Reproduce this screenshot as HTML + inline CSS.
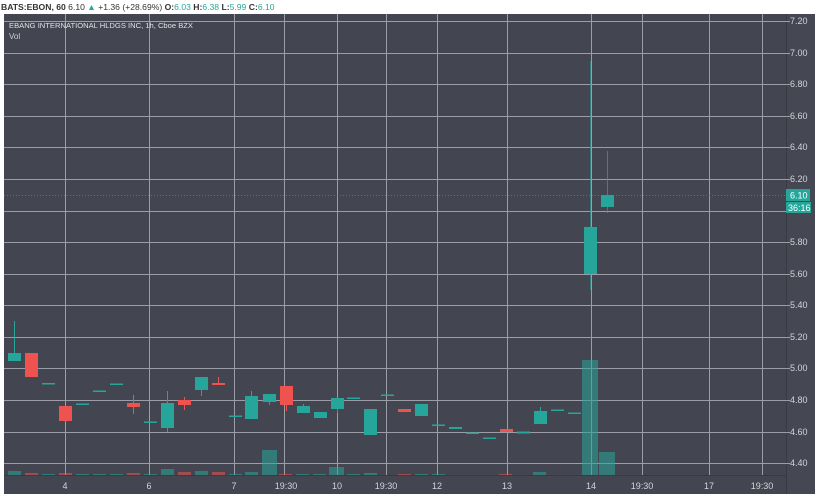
<!DOCTYPE html>
<html><head><meta charset="utf-8"><style>
body{margin:0;width:820px;height:498px;background:#fff;overflow:hidden;font-family:"Liberation Sans",sans-serif}
</style></head><body>
<svg width="820" height="498" xmlns="http://www.w3.org/2000/svg" font-family="Liberation Sans, sans-serif">
<rect x="0" y="0" width="820" height="498" fill="#fff"/>
<rect x="4" y="14" width="811" height="480" fill="#434550"/>
<rect x="786" y="14" width="29" height="480" fill="#454753"/>
<line x1="4" y1="475.5" x2="786" y2="475.5" stroke="#393a44" stroke-width="1"/>
<line x1="786.5" y1="14" x2="786.5" y2="494" stroke="#393a44" stroke-width="1"/>
<g stroke="#9c9da6" stroke-width="1">
<line x1="4" x2="790" y1="21.5" y2="21.5"/><line x1="4" x2="790" y1="53.5" y2="53.5"/><line x1="4" x2="790" y1="84.5" y2="84.5"/><line x1="4" x2="790" y1="116.5" y2="116.5"/><line x1="4" x2="790" y1="147.5" y2="147.5"/><line x1="4" x2="790" y1="179.5" y2="179.5"/><line x1="4" x2="790" y1="211.5" y2="211.5"/><line x1="4" x2="790" y1="242.5" y2="242.5"/><line x1="4" x2="790" y1="274.5" y2="274.5"/><line x1="4" x2="790" y1="305.5" y2="305.5"/><line x1="4" x2="790" y1="337.5" y2="337.5"/><line x1="4" x2="790" y1="368.5" y2="368.5"/><line x1="4" x2="790" y1="400.5" y2="400.5"/><line x1="4" x2="790" y1="432.5" y2="432.5"/><line x1="4" x2="790" y1="463.5" y2="463.5"/>
<line y1="14" y2="475" x1="65.5" x2="65.5"/><line y1="14" y2="475" x1="149.5" x2="149.5"/><line y1="14" y2="475" x1="234.5" x2="234.5"/><line y1="14" y2="475" x1="284.5" x2="284.5"/><line y1="14" y2="475" x1="337.5" x2="337.5"/><line y1="14" y2="475" x1="386.5" x2="386.5"/><line y1="14" y2="475" x1="437.5" x2="437.5"/><line y1="14" y2="475" x1="507.5" x2="507.5"/><line y1="14" y2="475" x1="591.5" x2="591.5"/><line y1="14" y2="475" x1="642.5" x2="642.5"/><line y1="14" y2="475" x1="709.5" x2="709.5"/><line y1="14" y2="475" x1="762.5" x2="762.5"/>
</g>
<line x1="4" x2="786" y1="195.5" y2="195.5" stroke="#26a69a" stroke-width="1" stroke-dasharray="1 2" opacity="0.7"/>
<g opacity="0.55">
<rect x="8" y="471" width="13" height="4" fill="#26a69a"/><rect x="25" y="473" width="13" height="2" fill="#ef5350"/><rect x="42" y="474" width="13" height="1" fill="#26a69a"/><rect x="59" y="473" width="13" height="2" fill="#ef5350"/><rect x="76" y="474" width="13" height="1" fill="#26a69a"/><rect x="93" y="474" width="13" height="1" fill="#26a69a"/><rect x="110" y="474" width="13" height="1" fill="#26a69a"/><rect x="127" y="473" width="13" height="2" fill="#ef5350"/><rect x="144" y="474" width="13" height="1" fill="#26a69a"/><rect x="161" y="469" width="13" height="6" fill="#26a69a"/><rect x="178" y="472" width="13" height="3" fill="#ef5350"/><rect x="195" y="471" width="13" height="4" fill="#26a69a"/><rect x="212" y="472" width="13" height="3" fill="#ef5350"/><rect x="229" y="474" width="13" height="1" fill="#26a69a"/><rect x="245" y="472" width="13" height="3" fill="#26a69a"/><rect x="262" y="450" width="15" height="25" fill="#26a69a"/><rect x="279" y="474" width="13" height="1" fill="#ef5350"/><rect x="296" y="474" width="13" height="1" fill="#26a69a"/><rect x="313" y="474" width="13" height="1" fill="#26a69a"/><rect x="329" y="467" width="15" height="8" fill="#26a69a"/><rect x="347" y="474" width="13" height="1" fill="#26a69a"/><rect x="364" y="473" width="13" height="2" fill="#26a69a"/><rect x="398" y="474" width="13" height="1" fill="#ef5350"/><rect x="415" y="474" width="13" height="1" fill="#26a69a"/><rect x="432" y="474" width="13" height="1" fill="#26a69a"/><rect x="499" y="474" width="13" height="1" fill="#ef5350"/><rect x="533" y="472" width="13" height="3" fill="#26a69a"/><rect x="582" y="360" width="16" height="115" fill="#26a69a"/><rect x="599" y="452" width="16" height="23" fill="#26a69a"/>
</g>
<g stroke-width="1">
<line x1="14.5" y1="321" x2="14.5" y2="361" stroke="#26a69a"/><rect x="8" y="353" width="13" height="8" fill="#26a69a"/>
<rect x="25" y="353" width="13" height="24" fill="#ef5350"/>
<rect x="42" y="383" width="13" height="1.5" fill="#26a69a"/>
<rect x="59" y="406" width="13" height="15" fill="#ef5350"/>
<rect x="76" y="403.5" width="13" height="1.5" fill="#26a69a"/>
<rect x="93" y="390.5" width="13" height="1.5" fill="#26a69a"/>
<rect x="110" y="383.5" width="13" height="1.5" fill="#26a69a"/>
<line x1="133.5" y1="395" x2="133.5" y2="414" stroke="#ef5350"/><rect x="127" y="403" width="13" height="4" fill="#ef5350"/>
<rect x="144" y="421.5" width="13" height="1.5" fill="#26a69a"/>
<line x1="167.5" y1="391" x2="167.5" y2="432" stroke="#26a69a"/><rect x="161" y="403" width="13" height="25" fill="#26a69a"/>
<line x1="184.5" y1="397" x2="184.5" y2="410" stroke="#ef5350"/><rect x="178" y="400" width="13" height="5" fill="#ef5350"/>
<line x1="201.5" y1="377" x2="201.5" y2="396" stroke="#26a69a"/><rect x="195" y="377" width="13" height="13" fill="#26a69a"/>
<line x1="218.5" y1="377" x2="218.5" y2="385" stroke="#ef5350"/><rect x="212" y="383" width="13" height="2" fill="#ef5350"/>
<rect x="229" y="415.5" width="13" height="1.5" fill="#26a69a"/>
<line x1="251.5" y1="391" x2="251.5" y2="419" stroke="#26a69a"/><rect x="245" y="396" width="13" height="23" fill="#26a69a"/>
<line x1="269.5" y1="394" x2="269.5" y2="405" stroke="#26a69a"/><rect x="263" y="394" width="13" height="8" fill="#26a69a"/>
<line x1="286.5" y1="386" x2="286.5" y2="411" stroke="#ef5350"/><rect x="280" y="386" width="13" height="19" fill="#ef5350"/>
<line x1="303.5" y1="404" x2="303.5" y2="413" stroke="#26a69a"/><rect x="297" y="406" width="13" height="7" fill="#26a69a"/>
<rect x="314" y="412" width="13" height="6" fill="#26a69a"/>
<line x1="337.5" y1="398" x2="337.5" y2="413" stroke="#26a69a"/><rect x="331" y="398" width="13" height="11" fill="#26a69a"/>
<rect x="347" y="397.5" width="13" height="1.5" fill="#26a69a"/>
<rect x="364" y="409" width="13" height="26" fill="#26a69a"/>
<rect x="381" y="394.5" width="13" height="1.5" fill="#26a69a"/>
<rect x="398" y="409" width="13" height="3" fill="#ef5350"/>
<rect x="415" y="404" width="13" height="12" fill="#26a69a"/>
<rect x="432" y="424.5" width="13" height="1.5" fill="#26a69a"/>
<rect x="449" y="427" width="13" height="2" fill="#26a69a"/>
<rect x="466" y="432.5" width="13" height="1.5" fill="#26a69a"/>
<rect x="483" y="437.5" width="13" height="1.5" fill="#26a69a"/>
<rect x="500" y="429" width="13" height="3" fill="#ef5350"/>
<rect x="517" y="431.5" width="13" height="2" fill="#26a69a"/>
<line x1="540.5" y1="407" x2="540.5" y2="424" stroke="#26a69a"/><rect x="534" y="411" width="13" height="13" fill="#26a69a"/>
<rect x="551" y="409.5" width="13" height="1.5" fill="#26a69a"/>
<rect x="568" y="412.5" width="13" height="1.5" fill="#26a69a"/>
<line x1="590.5" y1="61" x2="590.5" y2="290" stroke="#26a69a" opacity="0.6"/><rect x="584" y="227" width="13" height="47" fill="#26a69a"/>
<line x1="607.5" y1="151" x2="607.5" y2="213" stroke="#26a69a" opacity="0.7"/><rect x="601" y="195" width="13" height="12" fill="#26a69a"/>
</g>
<g fill="#d4d5da" font-size="9">
<text x="790" y="24">7.20</text><text x="790" y="56">7.00</text><text x="790" y="87">6.80</text><text x="790" y="119">6.60</text><text x="790" y="150">6.40</text><text x="790" y="182">6.20</text><text x="790" y="245">5.80</text><text x="790" y="277">5.60</text><text x="790" y="308">5.40</text><text x="790" y="340">5.20</text><text x="790" y="371">5.00</text><text x="790" y="403">4.80</text><text x="790" y="435">4.60</text><text x="790" y="466">4.40</text>
</g>
<rect x="786" y="189" width="24" height="12" fill="#26a69a"/>
<text x="790" y="198.5" fill="#fff" font-size="9">6.10</text>
<rect x="786" y="202" width="25" height="11" fill="#26a69a"/>
<text x="788" y="211" fill="#fff" font-size="9">36:16</text>
<g fill="#d4d5da" font-size="9" text-anchor="middle">
<text x="65" y="489">4</text><text x="149" y="489">6</text><text x="234" y="489">7</text><text x="286" y="489">19:30</text><text x="337" y="489">10</text><text x="386" y="489">19:30</text><text x="437" y="489">12</text><text x="507" y="489">13</text><text x="591" y="489">14</text><text x="642" y="489">19:30</text><text x="709" y="489">17</text><text x="762" y="489">19:30</text>
</g>
<text x="9" y="28" fill="#e0e1e6" font-size="7.6">EBANG INTERNATIONAL HLDGS INC, 1h, Cboe BZX</text>
<text x="9" y="39" fill="#d0d1d6" font-size="8">Vol</text>
<text x="1" y="10" font-size="8.6"><tspan fill="#333" font-weight="bold">BATS:EBON, 60 </tspan><tspan fill="#333">6.10 </tspan><tspan fill="#26a69a">▲</tspan><tspan fill="#333"> +1.36 (+28.69%) </tspan><tspan fill="#333" font-weight="bold">O:</tspan><tspan fill="#26a69a">6.03 </tspan><tspan fill="#333" font-weight="bold">H:</tspan><tspan fill="#26a69a">6.38 </tspan><tspan fill="#333" font-weight="bold">L:</tspan><tspan fill="#26a69a">5.99 </tspan><tspan fill="#333" font-weight="bold">C:</tspan><tspan fill="#26a69a">6.10</tspan></text>
</svg>
</body></html>
